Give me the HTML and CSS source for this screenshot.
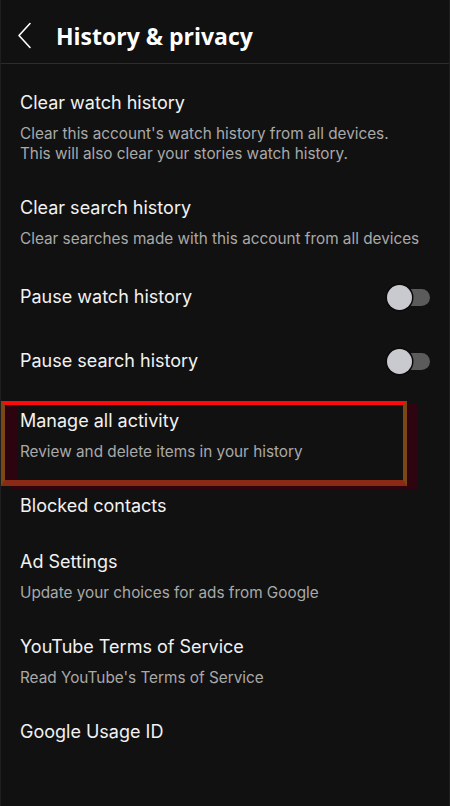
FILE: index.html
```html
<!DOCTYPE html>
<html lang="en">
<head>
<meta charset="utf-8">
<title>History &amp; privacy</title>
<link rel="stylesheet" href="styles.css">
</head>
<body>
<div class="screen">
  <header class="topbar">
    <svg class="back" width="16" height="28" viewBox="0 0 16 28" aria-hidden="true">
      <path d="M13 1.5 L2 13.5 L13 25.5" fill="none" stroke="#ffffff" stroke-width="1.6" stroke-linecap="round" stroke-linejoin="round"/>
    </svg>
    <h1 class="title">History &amp; privacy</h1>
  </header>
  <ul class="list">
    <li class="item">
      <div class="item-title">Clear watch history</div>
      <div class="item-sub">Clear this account's watch history from all devices.<br>This will also clear your stories watch history.</div>
    </li>
    <li class="item">
      <div class="item-title">Clear search history</div>
      <div class="item-sub">Clear searches made with this account from all devices</div>
    </li>
    <li class="item toggle-row">
      <div class="item-title">Pause watch history</div>
      <span class="switch"><span class="knob"></span></span>
    </li>
    <li class="item toggle-row">
      <div class="item-title">Pause search history</div>
      <span class="switch"><span class="knob"></span></span>
    </li>
    <li class="item highlighted">
      <div class="item-title">Manage all activity</div>
      <div class="item-sub">Review and delete items in your history</div>
      <span class="mark" aria-hidden="true"></span>
    </li>
    <li class="item">
      <div class="item-title">Blocked contacts</div>
    </li>
    <li class="item">
      <div class="item-title">Ad Settings</div>
      <div class="item-sub">Update your choices for ads from Google</div>
    </li>
    <li class="item">
      <div class="item-title">YouTube Terms of Service</div>
      <div class="item-sub">Read YouTube's Terms of Service</div>
    </li>
    <li class="item">
      <div class="item-title">Google Usage ID</div>
    </li>
  </ul>
</div>
</body>
</html>
```
FILE: styles.css
```css
* { box-sizing: border-box; }
html, body {
  margin: 0;
  padding: 0;
  background: #111111;
}
body {
  font-family: Inter, "Noto Sans", "Liberation Sans", sans-serif;
  color: #f1f1f1;
}
.screen {
  width: 450px;
  height: 806px;
  overflow: hidden;
  border-left: 1px solid #1f1f1f;
  border-right: 1px solid #1f1f1f;
  background: #111111;
}
.topbar {
  height: 64px;
  display: flex;
  align-items: center;
  padding-left: 16px;
  padding-top: 8px;
  border-bottom: 1px solid #2c2c2c;
}
.back {
  display: block;
}
.title {
  margin: 0 0 0 23px;
  font-family: "Open Sans", "Noto Sans", sans-serif;
  font-weight: 700;
  font-size: 23px;
  letter-spacing: 0;
  color: #ffffff;
  line-height: 30px;
}
.list {
  list-style: none;
  margin: 0;
  padding: 11px 0 0 0;
}
.item {
  position: relative;
  padding: 16px 19px;
}
.item-title {
  font-size: 18px;
  line-height: 24px;
  color: #f2f2f2;
}
.item-sub {
  margin-top: 9px;
  font-size: 15.3px;
  line-height: 20px;
  color: #a9a9a9;
}
.toggle-row {
  height: 64px;
  padding-top: 0;
  padding-bottom: 0;
  display: flex;
  align-items: center;
  justify-content: space-between;
}
.switch {
  position: relative;
  width: 37px;
  height: 17px;
  margin-right: 0;
  border-radius: 9px;
  background: #5b5b5b;
}
.knob {
  position: absolute;
  left: -6px;
  top: -4px;
  width: 25px;
  height: 25px;
  border-radius: 50%;
  background: #c9cacf;
  box-shadow: 0 0 0 1.5px #0a0a0a;
}
.mark {
  position: absolute;
  left: 0;
  top: 8px;
  width: 406px;
  height: 85px;
  border-top: 4px solid #ff0a0a;
  border-left: 4px solid #7b4714;
  border-right: 4px solid #7b4714;
  border-bottom: 6px solid #8a2a14;
  box-shadow: inset 12px 0 0 #2c0410, 10px 3px 0 #2e0410;
  pointer-events: none;
}
```
